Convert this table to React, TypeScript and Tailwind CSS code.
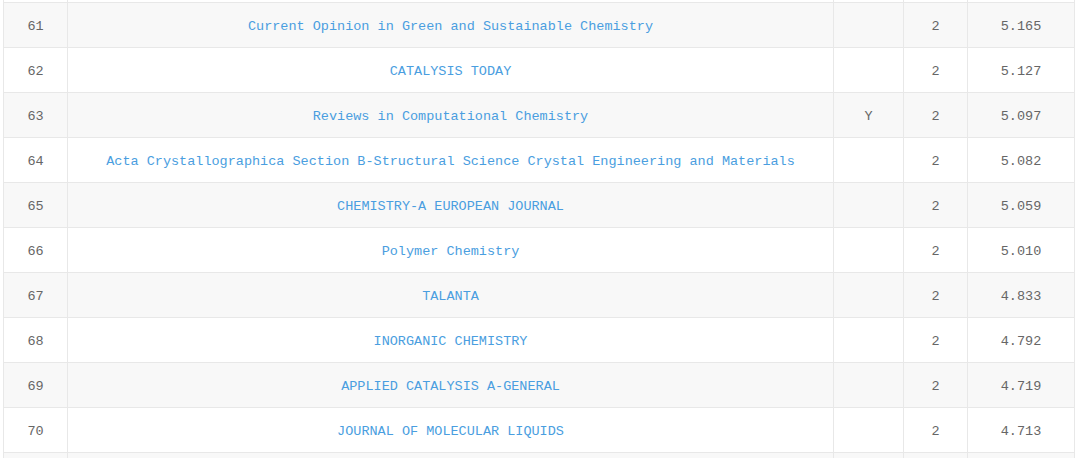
import React from "react";

const rows: [string, string, string, string, string][] = [
  ["", "", "", "", ""],
  ["61", "Current Opinion in Green and Sustainable Chemistry", "", "2", "5.165"],
  ["62", "CATALYSIS TODAY", "", "2", "5.127"],
  ["63", "Reviews in Computational Chemistry", "Y", "2", "5.097"],
  ["64", "Acta Crystallographica Section B-Structural Science Crystal Engineering and Materials", "", "2", "5.082"],
  ["65", "CHEMISTRY-A EUROPEAN JOURNAL", "", "2", "5.059"],
  ["66", "Polymer Chemistry", "", "2", "5.010"],
  ["67", "TALANTA", "", "2", "4.833"],
  ["68", "INORGANIC CHEMISTRY", "", "2", "4.792"],
  ["69", "APPLIED CATALYSIS A-GENERAL", "", "2", "4.719"],
  ["70", "JOURNAL OF MOLECULAR LIQUIDS", "", "2", "4.713"],
  ["", "", "", "", ""],
];

export default function App() {
  return (
    <div className="h-[458px] w-[1080px] overflow-hidden bg-white">
      <div className="ml-[3px] -mt-[42px] w-[1072px] border-l border-[#e8e8e8] font-['Liberation_Mono',monospace] text-[13.5px] text-[#666666]">
        {rows.map((r, i) => (
          <div
            key={i}
            className={`grid h-[45px] grid-cols-[64px_766px_70px_64px_107px] ${i % 2 === 1 ? "bg-[#f8f8f8]" : "bg-white"}`}
          >
            <div className="flex items-center justify-center border-r border-b border-[#e8e8e8] pt-[4px]">{r[0]}</div>
            <div className="flex items-center justify-center border-r border-b border-[#e8e8e8] pt-[4px] text-[#4a9ee0] whitespace-nowrap">{r[1]}</div>
            <div className="flex items-center justify-center border-r border-b border-[#e8e8e8] pt-[4px]">{r[2]}</div>
            <div className="flex items-center justify-center border-r border-b border-[#e8e8e8] pt-[4px]">{r[3]}</div>
            <div className="flex items-center justify-center border-r border-b border-[#e8e8e8] pt-[4px]">{r[4]}</div>
          </div>
        ))}
      </div>
    </div>
  );
}
